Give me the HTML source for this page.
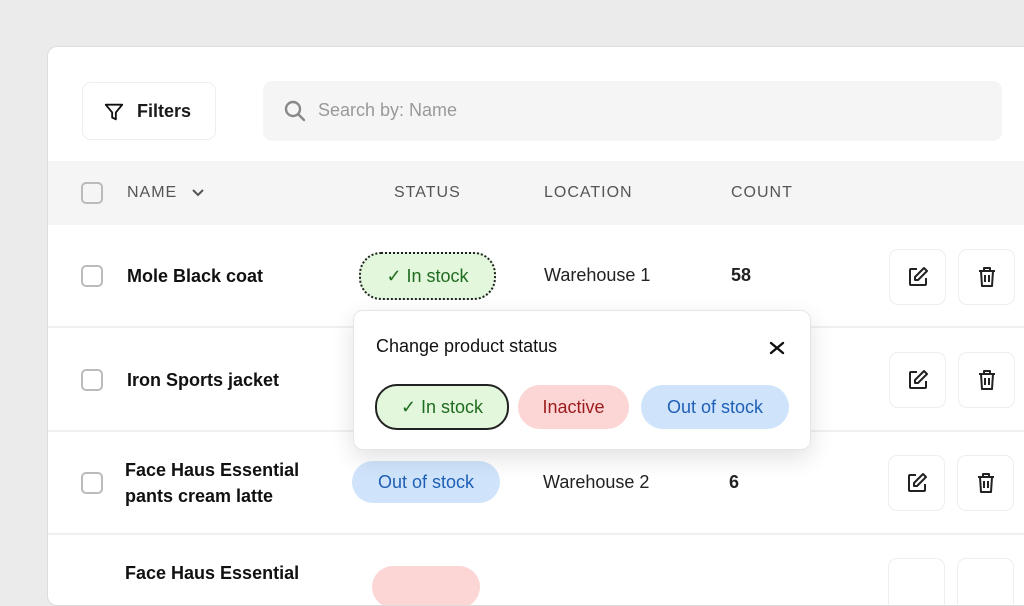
<!DOCTYPE html>
<html><head><style>
*{box-sizing:border-box;margin:0;padding:0}
body{width:1024px;height:575px;overflow:hidden;background:#ebebeb;font-family:"Liberation Sans",sans-serif;position:relative}
.card{position:absolute;left:47px;top:46px;width:1000px;height:560px;background:#fff;border:1px solid #dcdcdc;border-radius:10px;overflow:hidden}
.abs{position:absolute}
.filters{left:34px;top:35px;width:134px;height:58px;border:1px solid #eee;border-radius:9px;font-size:18px;font-weight:bold;color:#1a1a1a}
.search{left:215px;top:34px;width:739px;height:60px;background:#f5f5f5;border-radius:9px;font-size:18px;color:#999}
.thead{left:0;top:114px;width:1000px;height:64px;background:#f5f5f5}
.th{font-size:16px;letter-spacing:1px;color:#555;top:137px}
.cb{width:22px;height:22px;border:2px solid #bbb;border-radius:5px;left:33px}
.sep{left:0;width:1000px;height:2px;background:#f0f0f0}
.name{font-size:18px;font-weight:bold;color:#111;left:79px;line-height:26px}
.txt{font-size:18px;color:#222}
.pill{border-radius:22px;font-size:18px;text-align:center;line-height:42px;height:42px}
.btn{width:57px;height:56px;border:1px solid #eee;border-radius:9px;display:flex;align-items:center;justify-content:center}
</style></head><body>
<div class="card">
 <div class="abs filters"><svg class="abs" style="left:20px;top:18px" width="22" height="22" viewBox="0 0 24 24" fill="none" stroke="#111" stroke-width="2" stroke-linejoin="round"><path d="M3 4h18l-7 8.5V20l-4-2v-5.5z"/></svg><span class="abs" style="left:54px;top:18px">Filters</span></div>
 <div class="abs search"><svg class="abs" style="left:20px;top:18px" width="24" height="24" viewBox="0 0 24 24" fill="none" stroke="#888" stroke-width="2.4" stroke-linecap="round"><circle cx="10" cy="10" r="7"/><path d="M15 15l6 6"/></svg><span class="abs" style="left:55px;top:19px">Search by: Name</span></div>
 <div class="abs thead"></div>
 <div class="abs cb" style="top:135px"></div>
 <div class="abs th" style="left:79px">NAME <svg style="margin-left:8px;vertical-align:middle" width="14" height="10" viewBox="0 0 14 10" fill="none" stroke="#555" stroke-width="2"><path d="M2 2l5 5 5-5"/></svg></div>
 <div class="abs th" style="left:346px">STATUS</div>
 <div class="abs th" style="left:496px">LOCATION</div>
 <div class="abs th" style="left:683px">COUNT</div>

 <div class="abs sep" style="top:279px"></div>
 <div class="abs sep" style="top:383px"></div>
 <div class="abs sep" style="top:486px"></div>

 <div class="abs cb" style="top:218px"></div>
 <div class="abs name" style="top:216px">Mole Black coat</div>
 <div class="abs pill" style="left:311px;top:205px;width:137px;height:48px;line-height:44px;background:#e2f7dc;border:2px dotted #222;color:#1f6b1f">✓ In stock</div>
 <div class="abs txt" style="left:496px;top:218px">Warehouse 1</div>
 <div class="abs txt" style="left:683px;top:218px;font-weight:bold">58</div>

 <div class="abs cb" style="top:322px"></div>
 <div class="abs name" style="top:320px">Iron Sports jacket</div>

 <div class="abs cb" style="top:425px"></div>
 <div class="abs name" style="left:77px;top:410px">Face Haus Essential<br>pants cream latte</div>
 <div class="abs pill" style="left:304px;top:414px;width:148px;background:#cfe4fb;color:#1f5fb5">Out of stock</div>
 <div class="abs txt" style="left:495px;top:425px">Warehouse 2</div>
 <div class="abs txt" style="left:681px;top:425px;font-weight:bold">6</div>

 <div class="abs name" style="left:77px;top:513px">Face Haus Essential</div>
 <div class="abs pill" style="left:324px;top:519px;width:108px;background:#fcd5d5"></div>

 <!-- buttons -->
 <div class="abs btn" style="left:841px;top:202px"><svg width="24" height="24" viewBox="0 0 24 24" fill="none" stroke="#222" stroke-width="2" stroke-linejoin="round"><path d="M11 4H5a1 1 0 0 0-1 1v14a1 1 0 0 0 1 1h14a1 1 0 0 0 1-1v-6"/><path d="M18 3l3 3-9 9H9v-3z"/></svg></div>
 <div class="abs btn" style="left:910px;top:202px"><svg width="24" height="24" viewBox="0 0 24 24" fill="none" stroke="#222" stroke-width="2" stroke-linejoin="round"><path d="M4 6h16M9 6V3h6v3M6 6l1 15h10l1-15M10 10v7M14 10v7"/></svg></div>
 <div class="abs btn" style="left:841px;top:305px"><svg width="24" height="24" viewBox="0 0 24 24" fill="none" stroke="#222" stroke-width="2" stroke-linejoin="round"><path d="M11 4H5a1 1 0 0 0-1 1v14a1 1 0 0 0 1 1h14a1 1 0 0 0 1-1v-6"/><path d="M18 3l3 3-9 9H9v-3z"/></svg></div>
 <div class="abs btn" style="left:910px;top:305px"><svg width="24" height="24" viewBox="0 0 24 24" fill="none" stroke="#222" stroke-width="2" stroke-linejoin="round"><path d="M4 6h16M9 6V3h6v3M6 6l1 15h10l1-15M10 10v7M14 10v7"/></svg></div>
 <div class="abs btn" style="left:840px;top:408px"><svg width="24" height="24" viewBox="0 0 24 24" fill="none" stroke="#222" stroke-width="2" stroke-linejoin="round"><path d="M11 4H5a1 1 0 0 0-1 1v14a1 1 0 0 0 1 1h14a1 1 0 0 0 1-1v-6"/><path d="M18 3l3 3-9 9H9v-3z"/></svg></div>
 <div class="abs btn" style="left:909px;top:408px"><svg width="24" height="24" viewBox="0 0 24 24" fill="none" stroke="#222" stroke-width="2" stroke-linejoin="round"><path d="M4 6h16M9 6V3h6v3M6 6l1 15h10l1-15M10 10v7M14 10v7"/></svg></div>
 <div class="abs btn" style="left:840px;top:511px"></div>
 <div class="abs btn" style="left:909px;top:511px"></div>

 <!-- popup -->
 <div class="abs" style="left:305px;top:263px;width:458px;height:140px;background:#fff;border:1px solid #e6e6e6;border-radius:10px;box-shadow:0 8px 24px rgba(0,0,0,0.12)">
  <div class="abs" style="left:22px;top:25px;font-size:18px;color:#111">Change product status</div>
  <svg class="abs" style="left:415px;top:30px" width="16" height="14" viewBox="0 0 16 14" fill="none" stroke="#111" stroke-width="2.4" stroke-linecap="round"><path d="M2 2l12 10M14 2L2 12"/></svg>
  <div class="abs pill" style="left:21px;top:73px;width:134px;height:46px;line-height:42px;background:#e2f7dc;border:2px solid #222;color:#1f6b1f">✓ In stock</div>
  <div class="abs pill" style="left:164px;top:74px;width:111px;height:44px;line-height:44px;background:#fcd5d5;color:#9b1c1c">Inactive</div>
  <div class="abs pill" style="left:287px;top:74px;width:148px;height:44px;line-height:44px;background:#cfe4fb;color:#1f5fb5">Out of stock</div>
 </div>
</div>
</body></html>
